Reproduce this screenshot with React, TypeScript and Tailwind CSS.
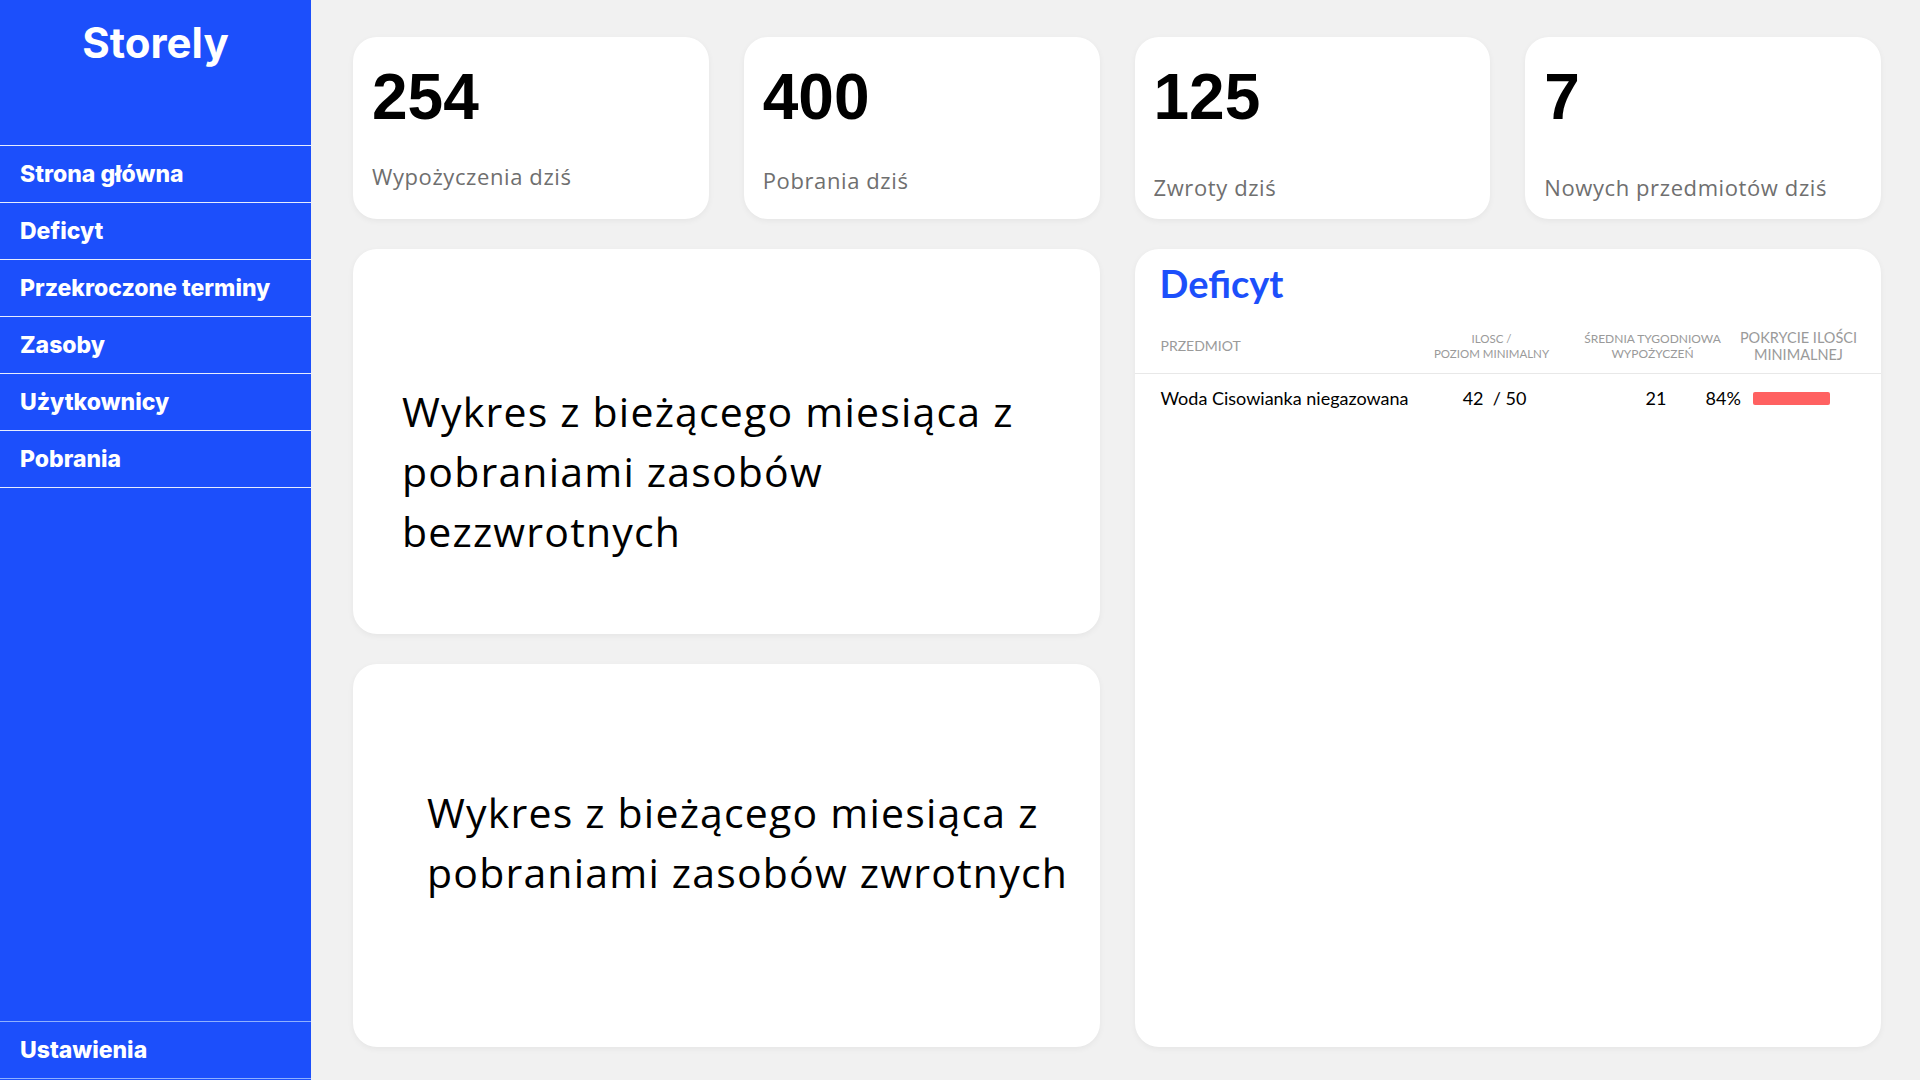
import React from "react";

const navItems = [
  "Strona główna",
  "Deficyt",
  "Przekroczone terminy",
  "Zasoby",
  "Użytkownicy",
  "Pobrania",
];

const stats = [
  { value: "254", label: "Wypożyczenia dziś", mt: "mt-[36px]" },
  { value: "400", label: "Pobrania dziś", mt: "mt-[40px]" },
  { value: "125", label: "Zwroty dziś", mt: "mt-[47px]" },
  { value: "7", label: "Nowych przedmiotów dziś", mt: "mt-[47px]" },
];

export default function App() {
  return (
    <div className="flex h-[1080px] w-[1920px] overflow-hidden bg-[#f1f1f1]">
      <aside className="flex h-full w-[311px] shrink-0 flex-col bg-[#1c4ffb] text-white">
        <div className="h-[145px] pt-[19px] text-center font-['Inter',sans-serif] text-[42px] font-bold leading-[48px]">
          Storely
        </div>
        <nav className="border-t border-[#e6ecff]">
          {navItems.map((item) => (
            <div
              key={item}
              className="flex h-[57px] items-center border-b border-[#e6ecff] pl-[20px] font-['Inter',sans-serif] text-[23px] font-extrabold"
            >
              {item}
            </div>
          ))}
        </nav>
        <div className="flex-1" />
        <div className="mb-px flex h-[58px] items-center border-y border-[#8fb0ff] pl-[20px] font-['Inter',sans-serif] text-[23px] font-extrabold">
          Ustawienia
        </div>
      </aside>

      <main className="grid flex-1 grid-cols-4 grid-rows-[182px_385px_383px] gap-x-[35px] gap-y-[30px] pb-[32px] pl-[42px] pr-[39px] pt-[37px]">
        {stats.map((s) => (
          <div
            key={s.value}
            className="rounded-[24px] bg-white px-[19px] pt-[28px] shadow-[0_2px_6px_rgba(0,0,0,0.05)]"
          >
            <div className="font-['Liberation_Sans',sans-serif] text-[64px] font-bold leading-none text-black">
              {s.value}
            </div>
            <div
              className={`${s.mt} font-['Open_Sans',sans-serif] text-[22px] leading-none tracking-[0.6px] text-[#6f6f6f]`}
            >
              {s.label}
            </div>
          </div>
        ))}

        <div className="col-span-2 rounded-[24px] bg-white pl-[49px] pt-[132px] shadow-[0_2px_6px_rgba(0,0,0,0.05)]">
          <p className="whitespace-nowrap font-['Open_Sans',sans-serif] text-[41px] leading-[60px] tracking-[1.2px] text-black">
            Wykres z bieżącego miesiąca z<br />
            pobraniami zasobów
            <br />
            bezzwrotnych
          </p>
        </div>

        <div className="col-span-2 row-span-2 flex flex-col rounded-[24px] bg-white shadow-[0_2px_6px_rgba(0,0,0,0.05)]">
          <h2 className="pl-[25px] pt-[15px] font-['Lato',sans-serif] text-[38px] font-bold leading-[38px] text-[#1c4ffb]">
            Deficyt
          </h2>
          <div className="mt-[16px] flex h-[56px] items-center border-b border-[#e8e8e8] pl-[26px] font-['Lato',sans-serif] uppercase text-[#9a9a9a]">
            <div className="w-[266px] text-[14px]">Przedmiot</div>
            <div className="flex w-[130px] flex-col items-center text-[11.5px] leading-[15px]">
              <span className="whitespace-nowrap">Ilosc /</span>
              <span className="whitespace-nowrap">Poziom minimalny</span>
            </div>
            <div className="flex w-[192px] flex-col items-center text-[12px] leading-[15px]">
              <span className="whitespace-nowrap">Średnia tygodniowa</span>
              <span className="whitespace-nowrap">wypożyczeń</span>
            </div>
            <div className="flex w-[100px] flex-col items-center text-[14.5px] leading-[17px]">
              <span className="whitespace-nowrap">Pokrycie ilości</span>
              <span className="whitespace-nowrap">minimalnej</span>
            </div>
          </div>
          <div className="flex h-[49px] items-center pl-[26px] font-['Lato',sans-serif] text-[18px] text-black">
            <div className="w-[266px] whitespace-nowrap">Woda Cisowianka niegazowana</div>
            <div className="w-[130px] whitespace-pre pl-[6px] text-center">42  / 50</div>
            <div className="w-[110px] text-right">21</div>
            <div className="ml-[39px]">84%</div>
            <div className="ml-[12px] h-[13px] w-[77px] rounded-[2px] bg-[#ff6161]" />
          </div>
        </div>

        <div className="col-span-2 rounded-[24px] bg-white pl-[74px] pt-[118px] shadow-[0_2px_6px_rgba(0,0,0,0.05)]">
          <p className="whitespace-nowrap font-['Open_Sans',sans-serif] text-[41px] leading-[60px] tracking-[1.2px] text-black">
            Wykres z bieżącego miesiąca z<br />
            pobraniami zasobów zwrotnych
          </p>
        </div>
      </main>
    </div>
  );
}
